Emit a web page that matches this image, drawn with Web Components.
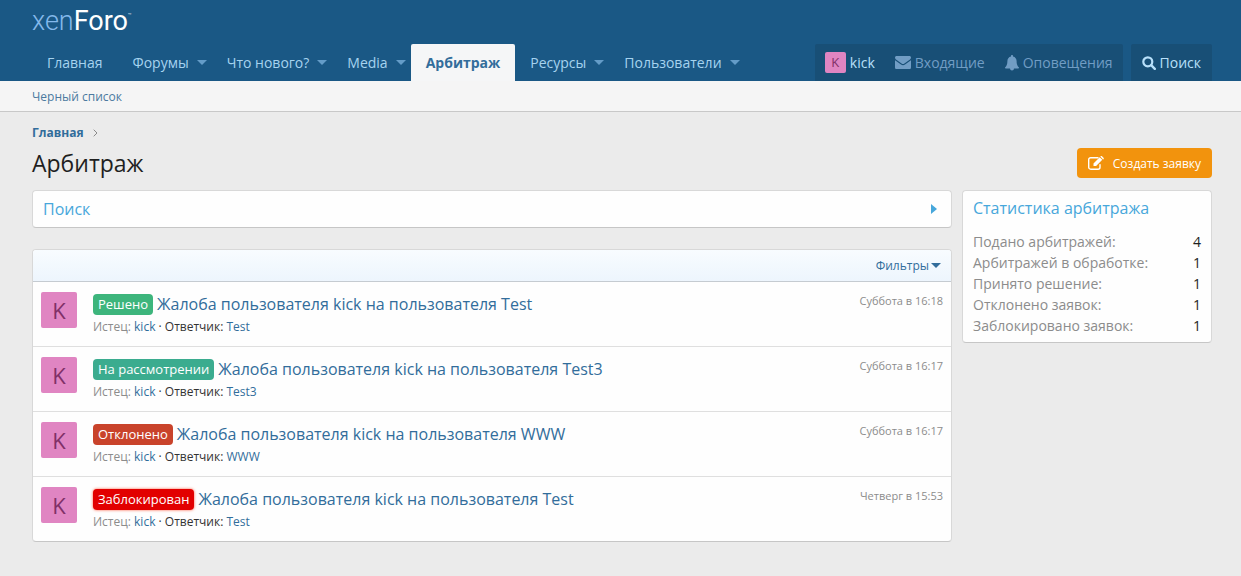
<!DOCTYPE html>
<html lang="ru">
<head>
<meta charset="utf-8">
<meta name="viewport" content="width=device-width, initial-scale=1">
<title>Арбитраж</title>
<style>
  body {
    margin: 0;
    min-height: 100vh;
    background: #ebebeb;
    color: #1f1f1f;
    font: 14px/21px "Open Sans", "Noto Sans", sans-serif;
    --link: #326d9b;
    --accent: #47a7db;
    --muted: #8c8c8c;
    --line: #d8d8d8;
    --edge: 32px;
    --edge-end: 29px;
  }
</style>
</head>
<body>
<forum-header>
  <nav-item slot="nav" href="#home">Главная</nav-item>
  <nav-item slot="nav" href="#forums" menu>Форумы</nav-item>
  <nav-item slot="nav" href="#new" menu>Что нового?</nav-item>
  <nav-item slot="nav" href="#media" menu>Media</nav-item>
  <nav-item slot="nav" href="#arbitrage" active>Арбитраж</nav-item>
  <nav-item slot="nav" href="#resources" menu>Ресурсы</nav-item>
  <nav-item slot="nav" href="#members" menu>Пользователи</nav-item>
</forum-header>
<sub-nav></sub-nav>
<page-body>
  <page-heading slot="heading">Арбитраж</page-heading>
  <search-panel></search-panel>
  <case-list>
    <case-item role="listitem" status="solved" label="Решено" name="Жалоба пользователя kick на пользователя Test" defendant="Test" time="Суббота в 16:18"></case-item>
    <case-item role="listitem" status="pending" label="На рассмотрении" name="Жалоба пользователя kick на пользователя Test3" defendant="Test3" time="Суббота в 16:17"></case-item>
    <case-item role="listitem" status="rejected" label="Отклонено" name="Жалоба пользователя kick на пользователя WWW" defendant="WWW" time="Суббота в 16:17"></case-item>
    <case-item role="listitem" status="blocked" label="Заблокирован" name="Жалоба пользователя kick на пользователя Test" defendant="Test" time="Четверг в 15:53"></case-item>
  </case-list>
  <stats-panel slot="side"></stats-panel>
</page-body>

<script>
const ICONS = {
  mail: ['0 0 16 13', '<path d="M0 1.6C0 .7.7 0 1.6 0h12.800C15.300 0 16 .7 16 1.600c0 .9-.6 1.600-1.300 2.100L9.400 7.500c-.9.700-1.900.700-2.800 0L1.300 3.700C.5 3.200 0 2.400 0 1.600zM0 4.300l6 4.300c1.200.9 2.800.9 4 0l6-4.300v7.100c0 .9-.7 1.600-1.600 1.600H1.600C.7 13 0 12.300 0 11.400z"/>'],
  bell: ['0 0 14 16', '<path d="M7 0c.6 0 1 .4 1 1v.4c2.300.5 3.600 2.300 3.600 4.600 0 3.500.9 5.200 2.400 6.400 0 .700-.5 1.100-1.100 1.100H9A2 2 0 0 1 5 13.500H1.100C.5 13.500 0 13.100 0 12.400 1.500 11.200 2.400 9.500 2.400 6 2.400 3.700 3.700 1.900 6 1.400V1c0-.6.4-1 1-1z"/>'],
  search: ['0 0 14 14', '<circle cx="5.800" cy="5.800" r="4.500" fill="none" stroke="currentColor" stroke-width="2.200"/><path d="M9.200 9.200l3.600 3.600" stroke="currentColor" stroke-width="2.400" stroke-linecap="round"/>'],
  edit: ['0 0 16 14', '<path d="M12 8.600v2.600a2 2 0 0 1-2 2H2.700a2 2 0 0 1-2-2V3.700a2 2 0 0 1 2-2H10" fill="none" stroke="currentColor" stroke-width="1.400" stroke-linecap="round"/><path d="M5.500 7.400L11.700 1.200l2.600 2.600L8.100 10H5.500zM12.300.6l.3-.3c.4-.4 1-.4 1.400 0l1.500 1.500c.4.4.4 1 0 1.400l-.4.400z"/>'],
  down: ['0 0 10 5', '<path d="M0 0h10L5 5z"/>'],
  right: ['0 0 6 10', '<path d="M0 0l6 5-6 5z"/>'],
  chevron: ['0 0 5 8', '<path d="M.7.700L4 4 .7 7.300" fill="none" stroke="currentColor"/>']
};

const BASE = `
  :host, *, *::before { box-sizing: border-box; }
  a { color: inherit; text-decoration: none; }
  button { font: inherit; color: inherit; border: 0; background: none; padding: 0; margin: 0; cursor: pointer; }
`;

function define(name, render) {
  customElements.define(name, class extends HTMLElement {
    connectedCallback() {
      if (this.shadowRoot) return;
      const tpl = document.createElement('template');
      tpl.innerHTML = '<style>' + BASE + '</style>' + render(this);
      this.attachShadow({ mode: 'open' }).append(tpl.content.cloneNode(true));
    }
  });
}

define('ui-icon', el => {
  const [box, shape] = ICONS[el.getAttribute('name')];
  const [, , w, h] = box.split(' ');
  return `
  <style>:host { display: inline-flex; flex: none; } svg { display: block; fill: currentColor; }</style>
  <svg viewBox="${box}" width="${w}" height="${h}" aria-hidden="true">${shape}</svg>`;
});

define('user-avatar', () => `
  <style>
    :host { display: flex; flex: none; align-items: center; justify-content: center;
      width: 36px; height: 36px; border-radius: 2px; background: #e085c2; color: #803068;
      font-size: 22px; line-height: 36px; }
    :host([small]) { width: 21px; height: 21px; font-size: 13px; line-height: 21px; }
  </style><slot>K</slot>`);

define('nav-item', el => `
  <style>
    :host { display: flex; height: 37px; color: #a6d3ef; }
    a { padding: 0 15px; line-height: 37px; white-space: nowrap; }
    :host([menu]) a { padding-right: 0; }
    :host([active]) { background: #f5f6f7; color: var(--link); font-weight: 700; border-radius: 2px 2px 0 0; }
    button { display: flex; align-items: center; justify-content: flex-end; width: 23px; padding: 0 5px; color: #649cc8; }
  </style>
  <a href="${el.getAttribute('href')}"><slot></slot></a>
  ${el.hasAttribute('menu') ? '<button type="button" aria-label="Открыть меню"><ui-icon name="down"></ui-icon></button>' : ''}`);

define('forum-header', () => `
  <style>
    :host { display: block; background: #1a5885; padding: 0 var(--edge-end) 0 var(--edge); }
    .logo { display: flex; align-items: flex-start; height: 44px; width: max-content;
      font: 300 27px/42px Roboto, sans-serif; color: #84b8ea; }
    .logo b { font-weight: 400; color: #fff; }
    .logo small { font-size: 6px; line-height: 30px; color: #fff; }
    .bar { display: flex; align-items: flex-end; justify-content: space-between; }
    nav, .account, .tools { display: flex; }
    .tools { gap: 8px; }
    .account, .search { background: #184f76; border-radius: 2px 2px 0 0; }
    .tools a, .search { display: flex; align-items: center; gap: 4px; height: 37px; padding: 0 10px; color: #719dc4; white-space: nowrap; }
    .tools .me { color: #b8e0fa; }
    .tools .search { color: #b8e0fa; padding: 0 11px; }
  </style>
  <header>
    <a class="logo" href="#home" aria-label="xenForo">xen<b>Foro</b><small>™</small></a>
    <div class="bar">
      <nav><slot name="nav"></slot></nav>
      <div class="tools">
        <div class="account">
          <a class="me" href="#kick"><user-avatar small></user-avatar>kick</a>
          <a href="#inbox"><ui-icon name="mail"></ui-icon>Входящие</a>
          <a href="#alerts"><ui-icon name="bell"></ui-icon>Оповещения</a>
        </div>
        <button class="search" type="button"><ui-icon name="search"></ui-icon>Поиск</button>
      </div>
    </div>
  </header>`);

define('sub-nav', () => `
  <style>
    :host { display: block; height: 31px; background: #f5f5f5; border-bottom: 1px solid #c8c8c8;
      padding: 0 var(--edge); font-size: 12px; line-height: 32px; color: #4b7a9f; }
  </style>
  <nav><a href="#blacklist">Черный список</a></nav>`);

define('page-body', () => `
  <style>
    :host { display: block; padding: 12px var(--edge-end) 20px var(--edge); }
    .crumbs { display: flex; align-items: center; gap: 9px; font-size: 12px; line-height: 18px; font-weight: 700; color: var(--link); }
    .crumbs ui-icon { color: #8a8a8a; }
    .cols { display: grid; grid-template-columns: minmax(0, 1fr) 250px; gap: 10px; align-items: start; }
    main { display: grid; gap: 21px; }
  </style>
  <nav class="crumbs"><a href="#home">Главная</a><ui-icon name="chevron"></ui-icon></nav>
  <slot name="heading"></slot>
  <div class="cols"><main><slot></slot></main><aside><slot name="side"></slot></aside></div>`);

define('page-heading', () => `
  <style>
    :host { display: flex; align-items: center; justify-content: space-between; padding: 6px 0 12px; }
    h1 { margin: 0; font-size: 23px; line-height: 30px; font-weight: 400; }
    button { display: flex; align-items: center; gap: 9px; height: 30px; padding: 0 11px; border-radius: 4px;
      background: #f2930d; color: #fff; font-size: 12px; }
  </style>
  <h1><slot></slot></h1>
  <button type="button"><ui-icon name="edit"></ui-icon>Создать заявку</button>`);

const PANEL = `:host { display: block; background: #fefefe; border: 1px solid var(--line); border-bottom-color: #c6c6c6; border-radius: 4px; }`;

define('search-panel', () => `
  <style>
    ${PANEL}
    button { display: flex; align-items: center; justify-content: space-between; width: 100%; height: 36px;
      padding: 0 14px 0 10px; font-size: 16px; color: var(--accent); }
  </style>
  <button type="button" aria-expanded="false">Поиск<ui-icon name="right"></ui-icon></button>`);

define('case-list', () => `
  <style>
    ${PANEL}
    .filters { display: flex; justify-content: flex-end; height: 32px; padding: 0 10px; border-bottom: 1px solid #c5cbd1;
      background: linear-gradient(#f8fcff, #edf5fd); border-radius: 3px 3px 0 0; font-size: 12px; color: var(--link); }
    .filters button { display: flex; align-items: center; gap: 2px; }
  </style>
  <div class="filters"><button type="button">Фильтры<ui-icon name="down"></ui-icon></button></div>
  <div role="list"><slot></slot></div>`);

define('case-item', el => `
  <style>
    :host { display: flex; height: 65px; padding: 10px 8px; gap: 16px; border-bottom: 1px solid #dfdfdf; }
    :host(:last-child) { height: 64px; border-bottom: 0; }
    .main { flex: 1; min-width: 0; }
    .title { display: flex; align-items: center; gap: 4px; height: 25px; font-size: 16px; line-height: 25px; color: var(--link); }
    .tag { height: 21px; padding: 0 5px; border-radius: 4px; color: #fff; font-size: 13px; line-height: 21px; white-space: nowrap; }
    .solved { background: #3db57c; }
    .pending { background: #3bac8f; }
    .rejected { background: #c9432b; }
    .blocked { background: #e20000; box-shadow: 0 0 3px #ff5a3c; }
    .meta { font-size: 12px; line-height: 19px; color: #333; }
    .meta span { color: var(--muted); }
    .meta a { color: var(--link); }
    time { font-size: 11px; line-height: 18px; color: var(--muted); }
  </style>
  <user-avatar></user-avatar>
  <div class="main">
    <div class="title"><span class="tag ${el.getAttribute('status')}">${el.getAttribute('label')}</span><a href="#case">${el.getAttribute('name')}</a></div>
    <div class="meta"><span>Истец:</span> <a href="#kick">kick</a> · Ответчик: <a href="#defendant">${el.getAttribute('defendant')}</a></div>
  </div>
  <time>${el.getAttribute('time')}</time>`);

define('stats-panel', () => `
  <style>
    ${PANEL}
    :host { padding: 5px 10px 6px; }
    h2 { margin: 0 0 10px; font-size: 16px; line-height: 25px; font-weight: 400; color: var(--accent); }
    dl { margin: 0; }
    dl div { display: flex; justify-content: space-between; }
    dt { color: var(--muted); }
    dd { margin: 0; }
  </style>
  <h2>Статистика арбитража</h2>
  <dl>
    <div><dt>Подано арбитражей:</dt><dd>4</dd></div>
    <div><dt>Арбитражей в обработке:</dt><dd>1</dd></div>
    <div><dt>Принято решение:</dt><dd>1</dd></div>
    <div><dt>Отклонено заявок:</dt><dd>1</dd></div>
    <div><dt>Заблокировано заявок:</dt><dd>1</dd></div>
  </dl>`);
</script>
</body>
</html>
